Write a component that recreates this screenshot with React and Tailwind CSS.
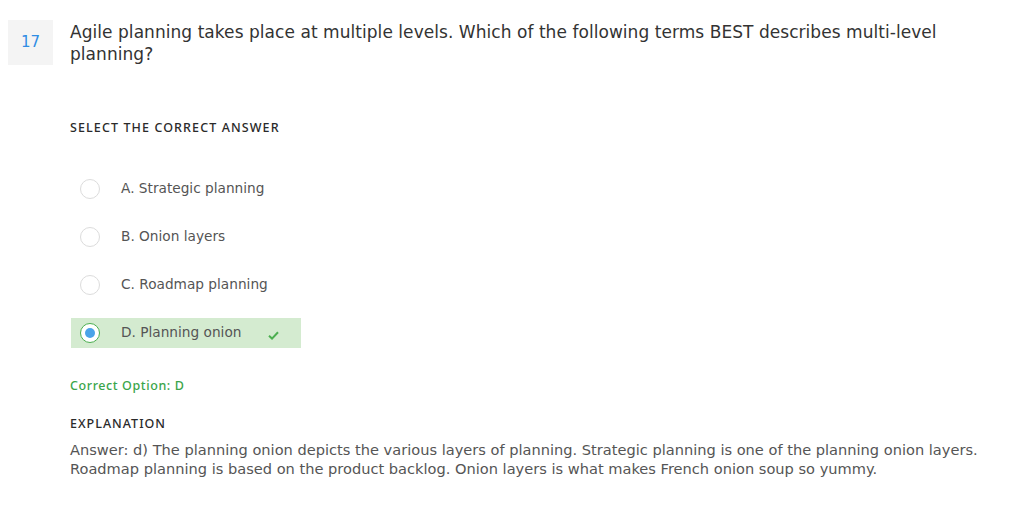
import React from 'react';

const options = [
  { key: 'A', label: 'Strategic planning' },
  { key: 'B', label: 'Onion layers' },
  { key: 'C', label: 'Roadmap planning' },
  { key: 'D', label: 'Planning onion', correct: true },
];

const Radio = ({ checked }) =>
  checked ? (
    <span className="w-5 h-5 rounded-full border border-[#4caf50] bg-white flex items-center justify-center">
      <span className="w-2.5 h-2.5 rounded-full bg-[#4aa3e8]"></span>
    </span>
  ) : (
    <span className="w-5 h-5 rounded-full border border-[#dcdcdc] bg-white"></span>
  );

export default function App() {
  return (
    <div className="w-[1026px] h-[513px] bg-white text-[#333] font-['DejaVu_Sans',sans-serif]">
      <div className="flex items-start pt-5 pl-2">
        <div className="w-[45px] h-[45px] bg-[#f4f4f4] flex items-center justify-center text-[15px] text-[#2f8de4]">17</div>
        <h2 className="ml-[17px] mt-[1px] w-[890px] text-[17px] leading-[22px] tracking-[0.05px] text-[#333]">
          Agile planning takes place at multiple levels. Which of the following terms BEST describes multi-level planning?
        </h2>
      </div>

      <div className="pl-[70px]">
        <div className="mt-[54px] font-['Noto_Sans',sans-serif] text-[12.5px] font-medium tracking-[1.1px] text-[#2a2a2a]">SELECT THE CORRECT ANSWER</div>

        <div className="mt-[36px] flex flex-col gap-[18px]">
          {options.map((o) => (
            <div
              key={o.key}
              className={`flex items-center w-[230px] h-[30px] ml-px pl-[9px] ${o.correct ? 'bg-[#d4ebd0]' : ''}`}
            >
              <Radio checked={o.correct} />
              <span className="ml-[21px] text-[13.7px] text-[#555]">
                {o.key}. {o.label}
              </span>
              {o.correct && (
                <svg className="ml-auto mr-[22px] mt-[6px]" width="11" height="9" viewBox="0 0 11 9">
                  <path d="M1 4.8 L4 7.6 L10 1.2" fill="none" stroke="#4caf50" strokeWidth="2" />
                </svg>
              )}
            </div>
          ))}
        </div>

        <div className="mt-[29px] font-['Noto_Sans',sans-serif] text-[12.5px] font-medium tracking-[0.6px] text-[#3aa54a]">Correct Option: D</div>
        <div className="mt-[19px] font-['Noto_Sans',sans-serif] text-[12.5px] font-medium tracking-[1px] text-[#2a2a2a]">EXPLANATION</div>
        <p className="mt-[7px] w-[920px] text-[14.6px] leading-[19px] text-[#555]">
          Answer: d) The planning onion depicts the various layers of planning. Strategic planning is one of the planning onion layers. Roadmap planning is based on the product backlog. Onion layers is what makes French onion soup so yummy.
        </p>
      </div>
    </div>
  );
}
